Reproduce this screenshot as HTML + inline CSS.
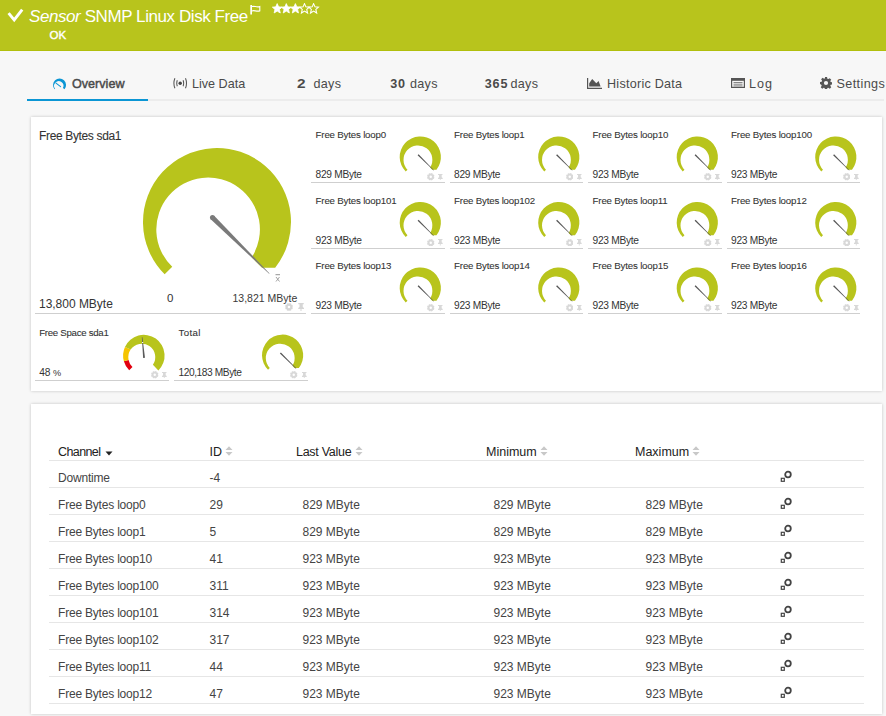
<!DOCTYPE html>
<html><head><meta charset="utf-8"><style>
*{margin:0;padding:0;box-sizing:border-box}
html,body{width:886px;height:716px;overflow:hidden;background:#f7f7f7;font-family:"Liberation Sans",sans-serif;position:relative}
.hdr{position:absolute;left:0;top:0;width:886px;height:51px;background:#b8c41c;border-bottom:1px solid #b1bf0c}
.ttl{position:absolute;left:29px;top:6.6px;font-size:17px;color:#fff;white-space:nowrap;letter-spacing:-0.42px}
.ok{position:absolute;left:49.5px;top:28.5px;font-size:11.5px;color:#fff;-webkit-text-stroke:0.4px #fff}
.tab{position:absolute;top:77.2px;font-size:12.6px;color:#4a4a4a;white-space:nowrap}
.tab b{color:#555}
.tabline{position:absolute;left:27px;top:99px;width:857px;height:2px;background:#ececec}
.tabsel{position:absolute;left:27px;top:99px;width:121px;height:2px;background:#0b96d4}
.card{position:absolute;left:31px;width:851px;background:#fff;box-shadow:0 0 3px rgba(0,0,0,0.21)}
.tl{position:absolute;font-size:9.7px;letter-spacing:-0.18px;-webkit-text-stroke:0.08px #333;color:#333;white-space:nowrap}
.tv{position:absolute;font-size:10.2px;letter-spacing:-0.3px;color:#333;white-space:nowrap}
.ul{position:absolute;height:1px;background:#cfcfcf}
.ct{position:absolute;font-size:12px;color:#444;white-space:nowrap;line-height:14px}
.th{position:absolute;top:444.5px;font-size:12.5px;color:#222;white-space:nowrap;line-height:14px}
.tline{position:absolute;left:49px;width:815px;height:1px;background:#e6e6e6}
</style></head><body>
<div class="hdr"></div>
<svg style="position:absolute;left:7px;top:8px" width="17" height="15" viewBox="0 0 17 15"><path d="M1.6 5.2L7.2 12 15.2 1.6" fill="none" stroke="#fff" stroke-width="2.9"/></svg>
<div class="ttl"><i>Sensor</i> SNMP Linux Disk Free</div>
<svg style="position:absolute;left:249px;top:4px" width="13" height="12" viewBox="0 0 13 12"><rect x="1.3" y="1" width="1.7" height="9.5" fill="#fff"/><path d="M2.9 2.6C5.2 1.6 7.5 3.6 10.8 2.6V6.9C7.5 7.9 5.2 5.9 2.9 6.9" fill="none" stroke="#fff" stroke-width="1.1"/></svg>
<svg style="position:absolute;left:271.8px;top:3px" width="50" height="12" viewBox="0 0 50 12">
<path transform="translate(0.0,0) scale(1.04)" d="M5 0.6l1.35 3.1 3.3.3-2.5 2.2.8 3.4L5 7.8 2.05 9.6l.8-3.4L.35 4l3.3-.3z" fill="#fff" stroke="#fff" stroke-width="0.8"/><path transform="translate(9.1,0) scale(1.04)" d="M5 0.6l1.35 3.1 3.3.3-2.5 2.2.8 3.4L5 7.8 2.05 9.6l.8-3.4L.35 4l3.3-.3z" fill="#fff" stroke="#fff" stroke-width="0.8"/><path transform="translate(18.2,0) scale(1.04)" d="M5 0.6l1.35 3.1 3.3.3-2.5 2.2.8 3.4L5 7.8 2.05 9.6l.8-3.4L.35 4l3.3-.3z" fill="#fff" stroke="#fff" stroke-width="0.8"/><path transform="translate(27.3,0) scale(1.04)" d="M5 0.6l1.35 3.1 3.3.3-2.5 2.2.8 3.4L5 7.8 2.05 9.6l.8-3.4L.35 4l3.3-.3z" fill="none" stroke="#fff" stroke-width="1.05"/><path transform="translate(36.4,0) scale(1.04)" d="M5 0.6l1.35 3.1 3.3.3-2.5 2.2.8 3.4L5 7.8 2.05 9.6l.8-3.4L.35 4l3.3-.3z" fill="none" stroke="#fff" stroke-width="1.05"/>
</svg>
<div class="ok">OK</div>

<div class="tabline"></div><div class="tabsel"></div>
<svg style="position:absolute;left:0;top:0" width="80" height="100"><path fill="#0b96d4" d="M54.57,89.28 A6.50,6.50 0 1 1 64.53,89.28 L62.96,87.96 A4.68,4.68 0 1 0 55.12,88.81 Z"/><path d="M56 83.1L60.6 86.7" stroke="#0b96d4" stroke-width="1.05" stroke-linecap="round"/></svg>
<div class="tab" style="left:72px;-webkit-text-stroke:0.45px #4a4a4a;letter-spacing:0px">Overview</div>
<svg style="position:absolute;left:172px;top:77px" width="16" height="12" viewBox="0 0 16 12"><circle cx="8.2" cy="6.2" r="1.7" fill="#444"/><path d="M5.3 3.2Q4.2 6.2 5.3 9.2 M11.1 3.2Q12.2 6.2 11.1 9.2 M2.9 1.2Q0.9 6.2 2.9 11.2 M13.5 1.2Q15.5 6.2 13.5 11.2" fill="none" stroke="#555" stroke-width="1.05"/></svg>
<div class="tab" style="left:192px">Live Data</div>
<div class="tab" style="left:297.3px;font-weight:bold;font-size:12.8px;top:75.9px;transform:scaleX(1.2);transform-origin:0 0">2</div><div class="tab" style="left:313.5px;letter-spacing:0.3px">days</div>
<div class="tab" style="left:390.3px;font-weight:bold;font-size:12.6px;letter-spacing:0.8px">30</div><div class="tab" style="left:410px;letter-spacing:0.3px">days</div>
<div class="tab" style="left:484.8px;font-weight:bold;font-size:12.6px;letter-spacing:0.8px">365</div><div class="tab" style="left:510.5px;letter-spacing:0.3px">days</div>
<svg style="position:absolute;left:587px;top:78px" width="15" height="11" viewBox="0 0 15 11"><path d="M0.6 0v10.4h14.4" fill="none" stroke="#555" stroke-width="1.2"/><path d="M2.2 8.6V5.3L5.2 1 9.3 5.2 11.6 3 13.6 8.6z" fill="#555"/></svg>
<div class="tab" style="left:607px;letter-spacing:0.25px">Historic Data</div>
<svg style="position:absolute;left:731px;top:78px" width="14" height="10" viewBox="0 0 14 10"><rect x="0.6" y="0.6" width="12.8" height="8.8" fill="none" stroke="#555" stroke-width="1.2"/><rect x="0.6" y="0.6" width="12.8" height="2.2" fill="#555"/><path d="M2.5 4.5h9 M2.5 6.2h9 M2.5 7.9h9" stroke="#777" stroke-width="0.9"/></svg>
<div class="tab" style="left:749px;letter-spacing:1px">Log</div>
<svg style="position:absolute;left:820px;top:77.3px" width="12" height="12" viewBox="0 0 16 16"><path fill="#555" fill-rule="evenodd" d="M6.6 0h2.8l.4 2.2 1.3.6 1.9-1.3 2 2-1.3 1.9.6 1.3 2.2.4v2.8l-2.2.4-.6 1.3 1.3 1.9-2 2-1.9-1.3-1.3.6-.4 2.2H6.6l-.4-2.2-1.3-.6-1.9 1.3-2-2 1.3-1.9-.6-1.3L0 9.4V6.6l2.2-.4.6-1.3-1.3-1.9 2-2 1.9 1.3 1.3-.6z M8 5.2a2.8 2.8 0 1 0 0 5.6 2.8 2.8 0 1 0 0-5.6z"/></svg>
<div class="tab" style="left:836.5px;letter-spacing:0.4px">Settings</div>

<div class="card" style="top:117px;height:274px"></div>
<div class="card" style="top:403.5px;height:310.5px"></div>

<div class="tl" style="left:39px;top:129px;font-size:12px;letter-spacing:-0.35px">Free Bytes sda1</div>
<div class="tv" style="left:39px;top:297px;font-size:12px;letter-spacing:-0.02px">13,800 MByte</div>
<div class="tv" style="left:167px;top:291.5px;font-size:11.5px">0</div>
<div class="tv" style="left:232.5px;top:292px;font-size:10.5px;letter-spacing:0;color:#3a3a3a">13,821 MByte</div>
<svg style="position:absolute;left:274px;top:273px" width="8" height="10" viewBox="0 0 8 10"><path d="M1.5 1.7h4.5" stroke="#888" stroke-width="0.9"/><path d="M2 4l3.5 4.5 M5.5 4L2 8.5" stroke="#999" stroke-width="0.9"/></svg>
<svg style="position:absolute;left:0;top:0" width="886" height="716">
<path fill="#b8c41c" d="M164.67,274.33 A74.00,74.00 0 1 1 275.18,267.73 L261.94,267.73 L251.73,257.35 A51.80,51.80 0 1 0 172.24,266.76 Z"/><path fill="#7a7a7a" d="M210.69,219.29 L269.12,273.82 L269.54,273.39 L214.20,215.73 Z"/><circle cx="212.44" cy="217.51" r="2.5" fill="#7a7a7a"/><path fill="#b8c41c" d="M405.73,171.57 A20.60,20.60 0 1 1 436.50,169.73 L432.17,169.73 L430.14,167.55 A14.42,14.42 0 1 0 407.48,169.82 Z"/><path fill="#555" d="M417.61,155.33 L433.65,170.45 L433.93,170.16 L418.59,154.33 Z"/><path fill="#b8c41c" d="M544.23,171.57 A20.60,20.60 0 1 1 575.00,169.73 L570.67,169.73 L568.64,167.55 A14.42,14.42 0 1 0 545.98,169.82 Z"/><path fill="#555" d="M556.11,155.33 L572.15,170.45 L572.43,170.16 L557.09,154.33 Z"/><path fill="#b8c41c" d="M682.73,171.57 A20.60,20.60 0 1 1 713.50,169.73 L709.17,169.73 L707.14,167.55 A14.42,14.42 0 1 0 684.48,169.82 Z"/><path fill="#555" d="M694.61,155.33 L710.65,170.45 L710.93,170.16 L695.59,154.33 Z"/><path fill="#b8c41c" d="M821.23,171.57 A20.60,20.60 0 1 1 852.00,169.73 L847.67,169.73 L845.64,167.55 A14.42,14.42 0 1 0 822.98,169.82 Z"/><path fill="#555" d="M833.11,155.33 L849.15,170.45 L849.43,170.16 L834.09,154.33 Z"/><path fill="#b8c41c" d="M405.73,237.07 A20.60,20.60 0 1 1 436.50,235.23 L432.17,235.23 L430.14,233.05 A14.42,14.42 0 1 0 407.48,235.32 Z"/><path fill="#555" d="M417.61,220.83 L433.65,235.95 L433.93,235.66 L418.59,219.83 Z"/><path fill="#b8c41c" d="M544.23,237.07 A20.60,20.60 0 1 1 575.00,235.23 L570.67,235.23 L568.64,233.05 A14.42,14.42 0 1 0 545.98,235.32 Z"/><path fill="#555" d="M556.11,220.83 L572.15,235.95 L572.43,235.66 L557.09,219.83 Z"/><path fill="#b8c41c" d="M682.73,237.07 A20.60,20.60 0 1 1 713.50,235.23 L709.17,235.23 L707.14,233.05 A14.42,14.42 0 1 0 684.48,235.32 Z"/><path fill="#555" d="M694.61,220.83 L710.65,235.95 L710.93,235.66 L695.59,219.83 Z"/><path fill="#b8c41c" d="M821.23,237.07 A20.60,20.60 0 1 1 852.00,235.23 L847.67,235.23 L845.64,233.05 A14.42,14.42 0 1 0 822.98,235.32 Z"/><path fill="#555" d="M833.11,220.83 L849.15,235.95 L849.43,235.66 L834.09,219.83 Z"/><path fill="#b8c41c" d="M405.73,302.57 A20.60,20.60 0 1 1 436.50,300.73 L432.17,300.73 L430.14,298.55 A14.42,14.42 0 1 0 407.48,300.82 Z"/><path fill="#555" d="M417.61,286.33 L433.65,301.45 L433.93,301.16 L418.59,285.33 Z"/><path fill="#b8c41c" d="M544.23,302.57 A20.60,20.60 0 1 1 575.00,300.73 L570.67,300.73 L568.64,298.55 A14.42,14.42 0 1 0 545.98,300.82 Z"/><path fill="#555" d="M556.11,286.33 L572.15,301.45 L572.43,301.16 L557.09,285.33 Z"/><path fill="#b8c41c" d="M682.73,302.57 A20.60,20.60 0 1 1 713.50,300.73 L709.17,300.73 L707.14,298.55 A14.42,14.42 0 1 0 684.48,300.82 Z"/><path fill="#555" d="M694.61,286.33 L710.65,301.45 L710.93,301.16 L695.59,285.33 Z"/><path fill="#b8c41c" d="M821.23,302.57 A20.60,20.60 0 1 1 852.00,300.73 L847.67,300.73 L845.64,298.55 A14.42,14.42 0 1 0 822.98,300.82 Z"/><path fill="#555" d="M833.11,286.33 L849.15,301.45 L849.43,301.16 L834.09,285.33 Z"/><path fill="#e2000f" d="M129.18,370.27 A20.75,20.75 0 0 1 123.87,361.21 L128.56,359.90 A13.49,13.49 0 0 0 132.48,366.97 Z"/><path fill="#f5c400" d="M123.87,361.21 A20.75,20.75 0 0 1 124.98,346.96 L130.66,349.56 A13.49,13.49 0 0 0 128.56,359.90 Z"/><path fill="#b8c41c" d="M124.98,346.96 A20.75,20.75 0 1 1 158.39,370.40 L152.91,364.82 A13.49,13.49 0 1 0 130.66,349.56 Z"/><path fill="#5a5a5a" d="M145.00,357.70 L142.41,337.15 L141.81,337.21 L143.11,357.88 Z"/><path stroke="#fff" stroke-width="1.2" d="M142.66,343.06 L142.57,342.06"/><path fill="#b8c41c" d="M268.03,369.77 A20.60,20.60 0 1 1 298.80,367.93 L294.47,367.93 L292.44,365.75 A14.42,14.42 0 1 0 269.78,368.02 Z"/><path fill="#555" d="M279.91,353.53 L295.95,368.65 L296.23,368.36 L280.89,352.53 Z"/>
</svg>
<div class="tl" style="left:315.6px;top:129.3px">Free Bytes loop0</div><div class="tv" style="left:315.6px;top:169.0px">829 MByte</div><div class="ul" style="left:311.0px;top:182.1px;width:133.5px"></div><svg style="position:absolute;left:427px;top:173.0px" width="7.5" height="7.5" viewBox="0 0 16 16"><path fill="#d8d8d8" fill-rule="evenodd" d="M14.30,8.25 L15.88,9.41 L14.56,12.57 L12.63,12.28 L12.28,12.63 L12.57,14.56 L9.41,15.88 L8.25,14.30 L7.75,14.30 L6.59,15.88 L3.43,14.56 L3.72,12.63 L3.37,12.28 L1.44,12.57 L0.12,9.41 L1.70,8.25 L1.70,7.75 L0.12,6.59 L1.44,3.43 L3.37,3.72 L3.72,3.37 L3.43,1.44 L6.59,0.12 L7.75,1.70 L8.25,1.70 L9.41,0.12 L12.57,1.44 L12.28,3.37 L12.63,3.72 L14.56,3.43 L15.88,6.59 L14.30,7.75Z M10.6,8 A2.6,2.6 0 1 0 5.4,8 A2.6,2.6 0 1 0 10.6,8Z"/></svg><svg style="position:absolute;left:437.4px;top:173.7px" width="6.5" height="6.5" viewBox="0 0 16 16"><path fill="#d8d8d8" d="M2.5 0h11v2.5h-2v5.5l2.5 2v2H9v4H7v-4H2.5v-2l2.5-2V2.5h-2.5z"/></svg><div class="tl" style="left:454.1px;top:129.3px">Free Bytes loop1</div><div class="tv" style="left:454.1px;top:169.0px">829 MByte</div><div class="ul" style="left:449.5px;top:182.1px;width:133.5px"></div><svg style="position:absolute;left:565.5px;top:173.0px" width="7.5" height="7.5" viewBox="0 0 16 16"><path fill="#d8d8d8" fill-rule="evenodd" d="M14.30,8.25 L15.88,9.41 L14.56,12.57 L12.63,12.28 L12.28,12.63 L12.57,14.56 L9.41,15.88 L8.25,14.30 L7.75,14.30 L6.59,15.88 L3.43,14.56 L3.72,12.63 L3.37,12.28 L1.44,12.57 L0.12,9.41 L1.70,8.25 L1.70,7.75 L0.12,6.59 L1.44,3.43 L3.37,3.72 L3.72,3.37 L3.43,1.44 L6.59,0.12 L7.75,1.70 L8.25,1.70 L9.41,0.12 L12.57,1.44 L12.28,3.37 L12.63,3.72 L14.56,3.43 L15.88,6.59 L14.30,7.75Z M10.6,8 A2.6,2.6 0 1 0 5.4,8 A2.6,2.6 0 1 0 10.6,8Z"/></svg><svg style="position:absolute;left:575.9px;top:173.7px" width="6.5" height="6.5" viewBox="0 0 16 16"><path fill="#d8d8d8" d="M2.5 0h11v2.5h-2v5.5l2.5 2v2H9v4H7v-4H2.5v-2l2.5-2V2.5h-2.5z"/></svg><div class="tl" style="left:592.6px;top:129.3px">Free Bytes loop10</div><div class="tv" style="left:592.6px;top:169.0px">923 MByte</div><div class="ul" style="left:588.0px;top:182.1px;width:133.5px"></div><svg style="position:absolute;left:704px;top:173.0px" width="7.5" height="7.5" viewBox="0 0 16 16"><path fill="#d8d8d8" fill-rule="evenodd" d="M14.30,8.25 L15.88,9.41 L14.56,12.57 L12.63,12.28 L12.28,12.63 L12.57,14.56 L9.41,15.88 L8.25,14.30 L7.75,14.30 L6.59,15.88 L3.43,14.56 L3.72,12.63 L3.37,12.28 L1.44,12.57 L0.12,9.41 L1.70,8.25 L1.70,7.75 L0.12,6.59 L1.44,3.43 L3.37,3.72 L3.72,3.37 L3.43,1.44 L6.59,0.12 L7.75,1.70 L8.25,1.70 L9.41,0.12 L12.57,1.44 L12.28,3.37 L12.63,3.72 L14.56,3.43 L15.88,6.59 L14.30,7.75Z M10.6,8 A2.6,2.6 0 1 0 5.4,8 A2.6,2.6 0 1 0 10.6,8Z"/></svg><svg style="position:absolute;left:714.4px;top:173.7px" width="6.5" height="6.5" viewBox="0 0 16 16"><path fill="#d8d8d8" d="M2.5 0h11v2.5h-2v5.5l2.5 2v2H9v4H7v-4H2.5v-2l2.5-2V2.5h-2.5z"/></svg><div class="tl" style="left:731.1px;top:129.3px">Free Bytes loop100</div><div class="tv" style="left:731.1px;top:169.0px">923 MByte</div><div class="ul" style="left:726.5px;top:182.1px;width:133.5px"></div><svg style="position:absolute;left:842.5px;top:173.0px" width="7.5" height="7.5" viewBox="0 0 16 16"><path fill="#d8d8d8" fill-rule="evenodd" d="M14.30,8.25 L15.88,9.41 L14.56,12.57 L12.63,12.28 L12.28,12.63 L12.57,14.56 L9.41,15.88 L8.25,14.30 L7.75,14.30 L6.59,15.88 L3.43,14.56 L3.72,12.63 L3.37,12.28 L1.44,12.57 L0.12,9.41 L1.70,8.25 L1.70,7.75 L0.12,6.59 L1.44,3.43 L3.37,3.72 L3.72,3.37 L3.43,1.44 L6.59,0.12 L7.75,1.70 L8.25,1.70 L9.41,0.12 L12.57,1.44 L12.28,3.37 L12.63,3.72 L14.56,3.43 L15.88,6.59 L14.30,7.75Z M10.6,8 A2.6,2.6 0 1 0 5.4,8 A2.6,2.6 0 1 0 10.6,8Z"/></svg><svg style="position:absolute;left:852.9px;top:173.7px" width="6.5" height="6.5" viewBox="0 0 16 16"><path fill="#d8d8d8" d="M2.5 0h11v2.5h-2v5.5l2.5 2v2H9v4H7v-4H2.5v-2l2.5-2V2.5h-2.5z"/></svg><div class="tl" style="left:315.6px;top:194.8px">Free Bytes loop101</div><div class="tv" style="left:315.6px;top:234.5px">923 MByte</div><div class="ul" style="left:311.0px;top:247.6px;width:133.5px"></div><svg style="position:absolute;left:427px;top:238.5px" width="7.5" height="7.5" viewBox="0 0 16 16"><path fill="#d8d8d8" fill-rule="evenodd" d="M14.30,8.25 L15.88,9.41 L14.56,12.57 L12.63,12.28 L12.28,12.63 L12.57,14.56 L9.41,15.88 L8.25,14.30 L7.75,14.30 L6.59,15.88 L3.43,14.56 L3.72,12.63 L3.37,12.28 L1.44,12.57 L0.12,9.41 L1.70,8.25 L1.70,7.75 L0.12,6.59 L1.44,3.43 L3.37,3.72 L3.72,3.37 L3.43,1.44 L6.59,0.12 L7.75,1.70 L8.25,1.70 L9.41,0.12 L12.57,1.44 L12.28,3.37 L12.63,3.72 L14.56,3.43 L15.88,6.59 L14.30,7.75Z M10.6,8 A2.6,2.6 0 1 0 5.4,8 A2.6,2.6 0 1 0 10.6,8Z"/></svg><svg style="position:absolute;left:437.4px;top:239.2px" width="6.5" height="6.5" viewBox="0 0 16 16"><path fill="#d8d8d8" d="M2.5 0h11v2.5h-2v5.5l2.5 2v2H9v4H7v-4H2.5v-2l2.5-2V2.5h-2.5z"/></svg><div class="tl" style="left:454.1px;top:194.8px">Free Bytes loop102</div><div class="tv" style="left:454.1px;top:234.5px">923 MByte</div><div class="ul" style="left:449.5px;top:247.6px;width:133.5px"></div><svg style="position:absolute;left:565.5px;top:238.5px" width="7.5" height="7.5" viewBox="0 0 16 16"><path fill="#d8d8d8" fill-rule="evenodd" d="M14.30,8.25 L15.88,9.41 L14.56,12.57 L12.63,12.28 L12.28,12.63 L12.57,14.56 L9.41,15.88 L8.25,14.30 L7.75,14.30 L6.59,15.88 L3.43,14.56 L3.72,12.63 L3.37,12.28 L1.44,12.57 L0.12,9.41 L1.70,8.25 L1.70,7.75 L0.12,6.59 L1.44,3.43 L3.37,3.72 L3.72,3.37 L3.43,1.44 L6.59,0.12 L7.75,1.70 L8.25,1.70 L9.41,0.12 L12.57,1.44 L12.28,3.37 L12.63,3.72 L14.56,3.43 L15.88,6.59 L14.30,7.75Z M10.6,8 A2.6,2.6 0 1 0 5.4,8 A2.6,2.6 0 1 0 10.6,8Z"/></svg><svg style="position:absolute;left:575.9px;top:239.2px" width="6.5" height="6.5" viewBox="0 0 16 16"><path fill="#d8d8d8" d="M2.5 0h11v2.5h-2v5.5l2.5 2v2H9v4H7v-4H2.5v-2l2.5-2V2.5h-2.5z"/></svg><div class="tl" style="left:592.6px;top:194.8px">Free Bytes loop11</div><div class="tv" style="left:592.6px;top:234.5px">923 MByte</div><div class="ul" style="left:588.0px;top:247.6px;width:133.5px"></div><svg style="position:absolute;left:704px;top:238.5px" width="7.5" height="7.5" viewBox="0 0 16 16"><path fill="#d8d8d8" fill-rule="evenodd" d="M14.30,8.25 L15.88,9.41 L14.56,12.57 L12.63,12.28 L12.28,12.63 L12.57,14.56 L9.41,15.88 L8.25,14.30 L7.75,14.30 L6.59,15.88 L3.43,14.56 L3.72,12.63 L3.37,12.28 L1.44,12.57 L0.12,9.41 L1.70,8.25 L1.70,7.75 L0.12,6.59 L1.44,3.43 L3.37,3.72 L3.72,3.37 L3.43,1.44 L6.59,0.12 L7.75,1.70 L8.25,1.70 L9.41,0.12 L12.57,1.44 L12.28,3.37 L12.63,3.72 L14.56,3.43 L15.88,6.59 L14.30,7.75Z M10.6,8 A2.6,2.6 0 1 0 5.4,8 A2.6,2.6 0 1 0 10.6,8Z"/></svg><svg style="position:absolute;left:714.4px;top:239.2px" width="6.5" height="6.5" viewBox="0 0 16 16"><path fill="#d8d8d8" d="M2.5 0h11v2.5h-2v5.5l2.5 2v2H9v4H7v-4H2.5v-2l2.5-2V2.5h-2.5z"/></svg><div class="tl" style="left:731.1px;top:194.8px">Free Bytes loop12</div><div class="tv" style="left:731.1px;top:234.5px">923 MByte</div><div class="ul" style="left:726.5px;top:247.6px;width:133.5px"></div><svg style="position:absolute;left:842.5px;top:238.5px" width="7.5" height="7.5" viewBox="0 0 16 16"><path fill="#d8d8d8" fill-rule="evenodd" d="M14.30,8.25 L15.88,9.41 L14.56,12.57 L12.63,12.28 L12.28,12.63 L12.57,14.56 L9.41,15.88 L8.25,14.30 L7.75,14.30 L6.59,15.88 L3.43,14.56 L3.72,12.63 L3.37,12.28 L1.44,12.57 L0.12,9.41 L1.70,8.25 L1.70,7.75 L0.12,6.59 L1.44,3.43 L3.37,3.72 L3.72,3.37 L3.43,1.44 L6.59,0.12 L7.75,1.70 L8.25,1.70 L9.41,0.12 L12.57,1.44 L12.28,3.37 L12.63,3.72 L14.56,3.43 L15.88,6.59 L14.30,7.75Z M10.6,8 A2.6,2.6 0 1 0 5.4,8 A2.6,2.6 0 1 0 10.6,8Z"/></svg><svg style="position:absolute;left:852.9px;top:239.2px" width="6.5" height="6.5" viewBox="0 0 16 16"><path fill="#d8d8d8" d="M2.5 0h11v2.5h-2v5.5l2.5 2v2H9v4H7v-4H2.5v-2l2.5-2V2.5h-2.5z"/></svg><div class="tl" style="left:315.6px;top:260.3px">Free Bytes loop13</div><div class="tv" style="left:315.6px;top:300.0px">923 MByte</div><div class="ul" style="left:311.0px;top:313.1px;width:133.5px"></div><svg style="position:absolute;left:427px;top:304.0px" width="7.5" height="7.5" viewBox="0 0 16 16"><path fill="#d8d8d8" fill-rule="evenodd" d="M14.30,8.25 L15.88,9.41 L14.56,12.57 L12.63,12.28 L12.28,12.63 L12.57,14.56 L9.41,15.88 L8.25,14.30 L7.75,14.30 L6.59,15.88 L3.43,14.56 L3.72,12.63 L3.37,12.28 L1.44,12.57 L0.12,9.41 L1.70,8.25 L1.70,7.75 L0.12,6.59 L1.44,3.43 L3.37,3.72 L3.72,3.37 L3.43,1.44 L6.59,0.12 L7.75,1.70 L8.25,1.70 L9.41,0.12 L12.57,1.44 L12.28,3.37 L12.63,3.72 L14.56,3.43 L15.88,6.59 L14.30,7.75Z M10.6,8 A2.6,2.6 0 1 0 5.4,8 A2.6,2.6 0 1 0 10.6,8Z"/></svg><svg style="position:absolute;left:437.4px;top:304.7px" width="6.5" height="6.5" viewBox="0 0 16 16"><path fill="#d8d8d8" d="M2.5 0h11v2.5h-2v5.5l2.5 2v2H9v4H7v-4H2.5v-2l2.5-2V2.5h-2.5z"/></svg><div class="tl" style="left:454.1px;top:260.3px">Free Bytes loop14</div><div class="tv" style="left:454.1px;top:300.0px">923 MByte</div><div class="ul" style="left:449.5px;top:313.1px;width:133.5px"></div><svg style="position:absolute;left:565.5px;top:304.0px" width="7.5" height="7.5" viewBox="0 0 16 16"><path fill="#d8d8d8" fill-rule="evenodd" d="M14.30,8.25 L15.88,9.41 L14.56,12.57 L12.63,12.28 L12.28,12.63 L12.57,14.56 L9.41,15.88 L8.25,14.30 L7.75,14.30 L6.59,15.88 L3.43,14.56 L3.72,12.63 L3.37,12.28 L1.44,12.57 L0.12,9.41 L1.70,8.25 L1.70,7.75 L0.12,6.59 L1.44,3.43 L3.37,3.72 L3.72,3.37 L3.43,1.44 L6.59,0.12 L7.75,1.70 L8.25,1.70 L9.41,0.12 L12.57,1.44 L12.28,3.37 L12.63,3.72 L14.56,3.43 L15.88,6.59 L14.30,7.75Z M10.6,8 A2.6,2.6 0 1 0 5.4,8 A2.6,2.6 0 1 0 10.6,8Z"/></svg><svg style="position:absolute;left:575.9px;top:304.7px" width="6.5" height="6.5" viewBox="0 0 16 16"><path fill="#d8d8d8" d="M2.5 0h11v2.5h-2v5.5l2.5 2v2H9v4H7v-4H2.5v-2l2.5-2V2.5h-2.5z"/></svg><div class="tl" style="left:592.6px;top:260.3px">Free Bytes loop15</div><div class="tv" style="left:592.6px;top:300.0px">923 MByte</div><div class="ul" style="left:588.0px;top:313.1px;width:133.5px"></div><svg style="position:absolute;left:704px;top:304.0px" width="7.5" height="7.5" viewBox="0 0 16 16"><path fill="#d8d8d8" fill-rule="evenodd" d="M14.30,8.25 L15.88,9.41 L14.56,12.57 L12.63,12.28 L12.28,12.63 L12.57,14.56 L9.41,15.88 L8.25,14.30 L7.75,14.30 L6.59,15.88 L3.43,14.56 L3.72,12.63 L3.37,12.28 L1.44,12.57 L0.12,9.41 L1.70,8.25 L1.70,7.75 L0.12,6.59 L1.44,3.43 L3.37,3.72 L3.72,3.37 L3.43,1.44 L6.59,0.12 L7.75,1.70 L8.25,1.70 L9.41,0.12 L12.57,1.44 L12.28,3.37 L12.63,3.72 L14.56,3.43 L15.88,6.59 L14.30,7.75Z M10.6,8 A2.6,2.6 0 1 0 5.4,8 A2.6,2.6 0 1 0 10.6,8Z"/></svg><svg style="position:absolute;left:714.4px;top:304.7px" width="6.5" height="6.5" viewBox="0 0 16 16"><path fill="#d8d8d8" d="M2.5 0h11v2.5h-2v5.5l2.5 2v2H9v4H7v-4H2.5v-2l2.5-2V2.5h-2.5z"/></svg><div class="tl" style="left:731.1px;top:260.3px">Free Bytes loop16</div><div class="tv" style="left:731.1px;top:300.0px">923 MByte</div><div class="ul" style="left:726.5px;top:313.1px;width:133.5px"></div><svg style="position:absolute;left:842.5px;top:304.0px" width="7.5" height="7.5" viewBox="0 0 16 16"><path fill="#d8d8d8" fill-rule="evenodd" d="M14.30,8.25 L15.88,9.41 L14.56,12.57 L12.63,12.28 L12.28,12.63 L12.57,14.56 L9.41,15.88 L8.25,14.30 L7.75,14.30 L6.59,15.88 L3.43,14.56 L3.72,12.63 L3.37,12.28 L1.44,12.57 L0.12,9.41 L1.70,8.25 L1.70,7.75 L0.12,6.59 L1.44,3.43 L3.37,3.72 L3.72,3.37 L3.43,1.44 L6.59,0.12 L7.75,1.70 L8.25,1.70 L9.41,0.12 L12.57,1.44 L12.28,3.37 L12.63,3.72 L14.56,3.43 L15.88,6.59 L14.30,7.75Z M10.6,8 A2.6,2.6 0 1 0 5.4,8 A2.6,2.6 0 1 0 10.6,8Z"/></svg><svg style="position:absolute;left:852.9px;top:304.7px" width="6.5" height="6.5" viewBox="0 0 16 16"><path fill="#d8d8d8" d="M2.5 0h11v2.5h-2v5.5l2.5 2v2H9v4H7v-4H2.5v-2l2.5-2V2.5h-2.5z"/></svg><div class="tl" style="left:39.2px;top:326.8px;letter-spacing:-0.3px">Free Space sda1</div><div class="tv" style="left:39.2px;top:366.5px;letter-spacing:-0.1px">48 <span style="font-size:9.2px;letter-spacing:0">%</span></div><div class="ul" style="left:35.0px;top:379.6px;width:133.5px"></div><svg style="position:absolute;left:151px;top:371.1px" width="7.5" height="7.5" viewBox="0 0 16 16"><path fill="#d8d8d8" fill-rule="evenodd" d="M14.30,8.25 L15.88,9.41 L14.56,12.57 L12.63,12.28 L12.28,12.63 L12.57,14.56 L9.41,15.88 L8.25,14.30 L7.75,14.30 L6.59,15.88 L3.43,14.56 L3.72,12.63 L3.37,12.28 L1.44,12.57 L0.12,9.41 L1.70,8.25 L1.70,7.75 L0.12,6.59 L1.44,3.43 L3.37,3.72 L3.72,3.37 L3.43,1.44 L6.59,0.12 L7.75,1.70 L8.25,1.70 L9.41,0.12 L12.57,1.44 L12.28,3.37 L12.63,3.72 L14.56,3.43 L15.88,6.59 L14.30,7.75Z M10.6,8 A2.6,2.6 0 1 0 5.4,8 A2.6,2.6 0 1 0 10.6,8Z"/></svg><svg style="position:absolute;left:161.4px;top:371.5px" width="6.5" height="6.5" viewBox="0 0 16 16"><path fill="#d8d8d8" d="M2.5 0h11v2.5h-2v5.5l2.5 2v2H9v4H7v-4H2.5v-2l2.5-2V2.5h-2.5z"/></svg><div class="tl" style="left:178.4px;top:326.8px;letter-spacing:0.4px">Total</div><div class="tv" style="left:178.4px;top:366.5px;letter-spacing:-0.42px">120,183 MByte</div><div class="ul" style="left:174.2px;top:379.6px;width:133.5px"></div><svg style="position:absolute;left:290.2px;top:371.1px" width="7.5" height="7.5" viewBox="0 0 16 16"><path fill="#d8d8d8" fill-rule="evenodd" d="M14.30,8.25 L15.88,9.41 L14.56,12.57 L12.63,12.28 L12.28,12.63 L12.57,14.56 L9.41,15.88 L8.25,14.30 L7.75,14.30 L6.59,15.88 L3.43,14.56 L3.72,12.63 L3.37,12.28 L1.44,12.57 L0.12,9.41 L1.70,8.25 L1.70,7.75 L0.12,6.59 L1.44,3.43 L3.37,3.72 L3.72,3.37 L3.43,1.44 L6.59,0.12 L7.75,1.70 L8.25,1.70 L9.41,0.12 L12.57,1.44 L12.28,3.37 L12.63,3.72 L14.56,3.43 L15.88,6.59 L14.30,7.75Z M10.6,8 A2.6,2.6 0 1 0 5.4,8 A2.6,2.6 0 1 0 10.6,8Z"/></svg><svg style="position:absolute;left:300.6px;top:371.5px" width="6.5" height="6.5" viewBox="0 0 16 16"><path fill="#d8d8d8" d="M2.5 0h11v2.5h-2v5.5l2.5 2v2H9v4H7v-4H2.5v-2l2.5-2V2.5h-2.5z"/></svg><div class="ul" style="left:35px;top:313px;width:271px"></div><svg style="position:absolute;left:285px;top:303px" width="8" height="8" viewBox="0 0 16 16"><path fill="#d6d6d6" fill-rule="evenodd" d="M14.30,8.25 L15.88,9.41 L14.56,12.57 L12.63,12.28 L12.28,12.63 L12.57,14.56 L9.41,15.88 L8.25,14.30 L7.75,14.30 L6.59,15.88 L3.43,14.56 L3.72,12.63 L3.37,12.28 L1.44,12.57 L0.12,9.41 L1.70,8.25 L1.70,7.75 L0.12,6.59 L1.44,3.43 L3.37,3.72 L3.72,3.37 L3.43,1.44 L6.59,0.12 L7.75,1.70 L8.25,1.70 L9.41,0.12 L12.57,1.44 L12.28,3.37 L12.63,3.72 L14.56,3.43 L15.88,6.59 L14.30,7.75Z M10.6,8 A2.6,2.6 0 1 0 5.4,8 A2.6,2.6 0 1 0 10.6,8Z"/></svg><svg style="position:absolute;left:297px;top:303px" width="8" height="8" viewBox="0 0 16 16"><path fill="#d6d6d6" d="M2.5 0h11v2.5h-2v5.5l2.5 2v2H9v4H7v-4H2.5v-2l2.5-2V2.5h-2.5z"/></svg>

<div class="th" style="left:58px;letter-spacing:-0.6px">Channel</div>
<svg style="position:absolute;left:105px;top:451px" width="8" height="5" viewBox="0 0 8 5"><path d="M0.5 0.5h7L4 4.5z" fill="#222"/></svg>
<div class="th" style="left:209.5px">ID</div><svg style="position:absolute;left:225px;top:445px" width="8" height="12" viewBox="0 0 8 12"><path d="M0.5 5L4 1.2 7.5 5z M0.5 7L4 10.8 7.5 7z" fill="#c8c8c8"/></svg>
<div class="th" style="left:296px;letter-spacing:-0.28px">Last Value</div><svg style="position:absolute;left:355px;top:445px" width="8" height="12" viewBox="0 0 8 12"><path d="M0.5 5L4 1.2 7.5 5z M0.5 7L4 10.8 7.5 7z" fill="#c8c8c8"/></svg>
<div class="th" style="left:486px">Minimum</div><svg style="position:absolute;left:540px;top:445px" width="8" height="12" viewBox="0 0 8 12"><path d="M0.5 5L4 1.2 7.5 5z M0.5 7L4 10.8 7.5 7z" fill="#c8c8c8"/></svg>
<div class="th" style="left:635px">Maximum</div><svg style="position:absolute;left:692px;top:445px" width="8" height="12" viewBox="0 0 8 12"><path d="M0.5 5L4 1.2 7.5 5z M0.5 7L4 10.8 7.5 7z" fill="#c8c8c8"/></svg>
<div class="tline" style="top:460px"></div>
<div class="ct" style="left:58px;top:471px;letter-spacing:-0.2px">Downtime</div><div class="ct" style="left:209.5px;top:471px">-4</div><div class="tline" style="top:487.0px"></div><svg style="position:absolute;left:780px;top:470px" width="13" height="13" viewBox="0 0 13 13"><circle cx="8" cy="4.5" r="2.8" fill="none" stroke="#444" stroke-width="1.8"/><rect x="1.3" y="8.3" width="3" height="3" fill="none" stroke="#444" stroke-width="1.2"/></svg><div class="ct" style="left:58px;top:498px;letter-spacing:-0.2px">Free Bytes loop0</div><div class="ct" style="left:209.5px;top:498px">29</div><div class="ct" style="left:302.5px;top:498px">829 MByte</div><div class="ct" style="left:493.5px;top:498px">829 MByte</div><div class="ct" style="left:645.5px;top:498px">829 MByte</div><div class="tline" style="top:514.0px"></div><svg style="position:absolute;left:780px;top:497px" width="13" height="13" viewBox="0 0 13 13"><circle cx="8" cy="4.5" r="2.8" fill="none" stroke="#444" stroke-width="1.8"/><rect x="1.3" y="8.3" width="3" height="3" fill="none" stroke="#444" stroke-width="1.2"/></svg><div class="ct" style="left:58px;top:525px;letter-spacing:-0.2px">Free Bytes loop1</div><div class="ct" style="left:209.5px;top:525px">5</div><div class="ct" style="left:302.5px;top:525px">829 MByte</div><div class="ct" style="left:493.5px;top:525px">829 MByte</div><div class="ct" style="left:645.5px;top:525px">829 MByte</div><div class="tline" style="top:541.0px"></div><svg style="position:absolute;left:780px;top:524px" width="13" height="13" viewBox="0 0 13 13"><circle cx="8" cy="4.5" r="2.8" fill="none" stroke="#444" stroke-width="1.8"/><rect x="1.3" y="8.3" width="3" height="3" fill="none" stroke="#444" stroke-width="1.2"/></svg><div class="ct" style="left:58px;top:552px;letter-spacing:-0.2px">Free Bytes loop10</div><div class="ct" style="left:209.5px;top:552px">41</div><div class="ct" style="left:302.5px;top:552px">923 MByte</div><div class="ct" style="left:493.5px;top:552px">923 MByte</div><div class="ct" style="left:645.5px;top:552px">923 MByte</div><div class="tline" style="top:568.0px"></div><svg style="position:absolute;left:780px;top:551px" width="13" height="13" viewBox="0 0 13 13"><circle cx="8" cy="4.5" r="2.8" fill="none" stroke="#444" stroke-width="1.8"/><rect x="1.3" y="8.3" width="3" height="3" fill="none" stroke="#444" stroke-width="1.2"/></svg><div class="ct" style="left:58px;top:579px;letter-spacing:-0.2px">Free Bytes loop100</div><div class="ct" style="left:209.5px;top:579px">311</div><div class="ct" style="left:302.5px;top:579px">923 MByte</div><div class="ct" style="left:493.5px;top:579px">923 MByte</div><div class="ct" style="left:645.5px;top:579px">923 MByte</div><div class="tline" style="top:595.0px"></div><svg style="position:absolute;left:780px;top:578px" width="13" height="13" viewBox="0 0 13 13"><circle cx="8" cy="4.5" r="2.8" fill="none" stroke="#444" stroke-width="1.8"/><rect x="1.3" y="8.3" width="3" height="3" fill="none" stroke="#444" stroke-width="1.2"/></svg><div class="ct" style="left:58px;top:606px;letter-spacing:-0.2px">Free Bytes loop101</div><div class="ct" style="left:209.5px;top:606px">314</div><div class="ct" style="left:302.5px;top:606px">923 MByte</div><div class="ct" style="left:493.5px;top:606px">923 MByte</div><div class="ct" style="left:645.5px;top:606px">923 MByte</div><div class="tline" style="top:622.0px"></div><svg style="position:absolute;left:780px;top:605px" width="13" height="13" viewBox="0 0 13 13"><circle cx="8" cy="4.5" r="2.8" fill="none" stroke="#444" stroke-width="1.8"/><rect x="1.3" y="8.3" width="3" height="3" fill="none" stroke="#444" stroke-width="1.2"/></svg><div class="ct" style="left:58px;top:633px;letter-spacing:-0.2px">Free Bytes loop102</div><div class="ct" style="left:209.5px;top:633px">317</div><div class="ct" style="left:302.5px;top:633px">923 MByte</div><div class="ct" style="left:493.5px;top:633px">923 MByte</div><div class="ct" style="left:645.5px;top:633px">923 MByte</div><div class="tline" style="top:649.0px"></div><svg style="position:absolute;left:780px;top:632px" width="13" height="13" viewBox="0 0 13 13"><circle cx="8" cy="4.5" r="2.8" fill="none" stroke="#444" stroke-width="1.8"/><rect x="1.3" y="8.3" width="3" height="3" fill="none" stroke="#444" stroke-width="1.2"/></svg><div class="ct" style="left:58px;top:660px;letter-spacing:-0.2px">Free Bytes loop11</div><div class="ct" style="left:209.5px;top:660px">44</div><div class="ct" style="left:302.5px;top:660px">923 MByte</div><div class="ct" style="left:493.5px;top:660px">923 MByte</div><div class="ct" style="left:645.5px;top:660px">923 MByte</div><div class="tline" style="top:676.0px"></div><svg style="position:absolute;left:780px;top:659px" width="13" height="13" viewBox="0 0 13 13"><circle cx="8" cy="4.5" r="2.8" fill="none" stroke="#444" stroke-width="1.8"/><rect x="1.3" y="8.3" width="3" height="3" fill="none" stroke="#444" stroke-width="1.2"/></svg><div class="ct" style="left:58px;top:687px;letter-spacing:-0.2px">Free Bytes loop12</div><div class="ct" style="left:209.5px;top:687px">47</div><div class="ct" style="left:302.5px;top:687px">923 MByte</div><div class="ct" style="left:493.5px;top:687px">923 MByte</div><div class="ct" style="left:645.5px;top:687px">923 MByte</div><div class="tline" style="top:703.0px"></div><svg style="position:absolute;left:780px;top:686px" width="13" height="13" viewBox="0 0 13 13"><circle cx="8" cy="4.5" r="2.8" fill="none" stroke="#444" stroke-width="1.8"/><rect x="1.3" y="8.3" width="3" height="3" fill="none" stroke="#444" stroke-width="1.2"/></svg>
</body></html>
